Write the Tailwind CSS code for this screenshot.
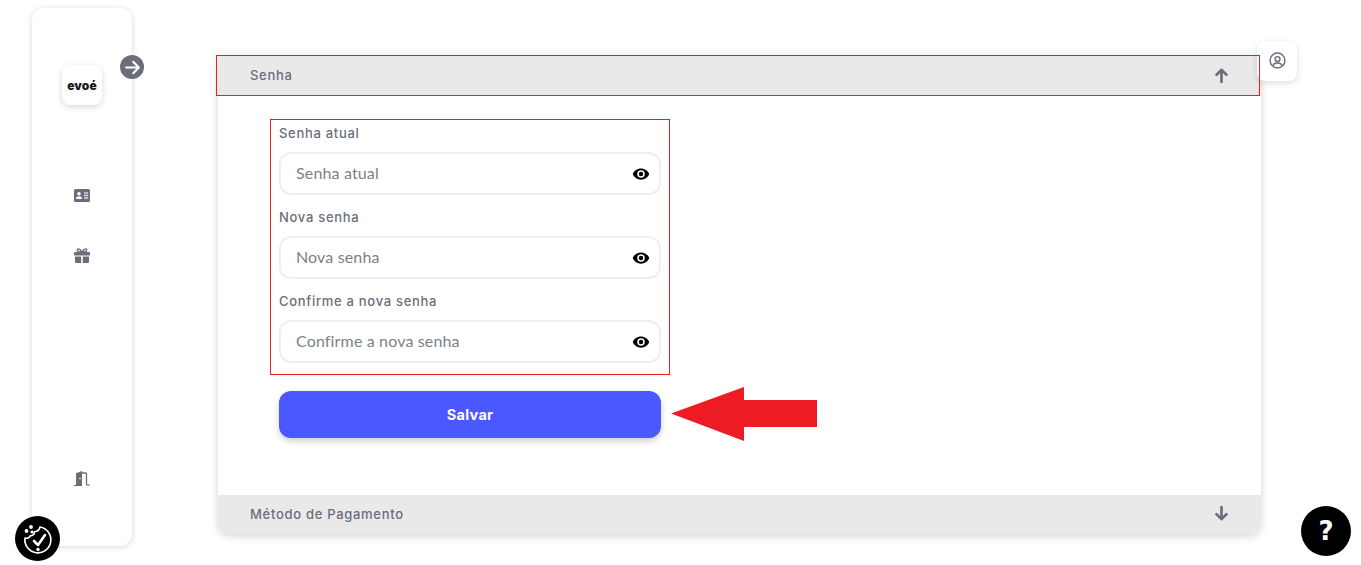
<!DOCTYPE html>
<html lang="en">
<head>
  <meta charset="UTF-8">
  <title>Senha</title>
  <script src="https://cdn.jsdelivr.net/npm/@tailwindcss/browser@4"></script>
</head>
<body class="bg-white h-[565px] overflow-hidden relative font-['Inter',sans-serif]">

  <div class="flex items-start h-[565px] pt-2 pl-8">
    <!-- Sidebar -->
    <aside class="relative w-[100px] h-[538px] bg-white rounded-xl shadow-[0_1px_6px_rgba(0,0,0,0.16)] flex flex-col items-center pt-[57px] pb-[60px] shrink-0">
      <div class="w-10 h-10 bg-white rounded-lg shadow-[0_2px_6px_rgba(0,0,0,0.16)] flex items-center justify-center">
        <span class="font-black text-[12px] text-[#1b1b1f] tracking-[0.1px] pt-px">evoé</span>
      </div>

      <svg class="mt-[84px]" width="16" height="13" viewBox="0 0 16 13">
        <rect width="16" height="13" rx="1.5" fill="#6b6e7a"/>
        <circle cx="5" cy="4.8" r="1.8" fill="#fff"/>
        <path d="M2 10c0-2 1.300-2.700 3-2.700S8 8 8 10z" fill="#fff"/>
        <path d="M10 4h4.200M10 6.500h4.200M10 9h4.200" stroke="#d5d6da" stroke-width="1.300"/>
      </svg>

      <svg class="mt-[46px]" width="16" height="15" viewBox="0 0 16 15">
        <path d="M8 4C6 .5 3.500.2 3.200 2 3 3.500 5 4 8 4c3 0 5-.5 4.800-2C12.500.2 10 .5 8 4z" fill="none" stroke="#6b6e7a" stroke-width="1.300"/>
        <rect y="4" width="16" height="3.500" rx=".6" fill="#6b6e7a"/>
        <path d="M1 8.500h6.200V15H2a1 1 0 0 1-1-1zM8.800 8.500H15V14a1 1 0 0 1-1 1H8.800z" fill="#6b6e7a"/>
      </svg>

      <svg class="mt-auto" width="16" height="15" viewBox="0 0 16 15">
        <path d="M2 14V2.200L8 0v14z" fill="#6b6e7a"/>
        <circle cx="6" cy="7.500" r=".8" fill="#fff"/>
        <path d="M8 2h3.500a1 1 0 0 1 1 1v10.500c0 .5.500.7 3 .7" fill="none" stroke="#6b6e7a" stroke-width="1.300"/>
        <path d="M0 14.500h8" stroke="#6b6e7a" stroke-width="1.200"/>
      </svg>

      <button class="absolute left-[88px] top-[47px] w-6 h-6 rounded-full bg-[#6b6e7a] flex items-center justify-center">
        <svg width="17" height="17" viewBox="0 0 24 24" fill="none" stroke="#fff" stroke-width="3" stroke-linecap="round" stroke-linejoin="round">
          <path d="M3 12h18M13 4l8 8-8 8"/>
        </svg>
      </button>
    </aside>

    <!-- Accordion card -->
    <main class="ml-[86px] mt-[48px] w-[1043px] h-[478px] bg-white rounded-b-xl shadow-[0_2px_8px_rgba(0,0,0,0.18)] flex flex-col shrink-0">
      <div class="h-10 bg-[#e9e9e9] flex items-center justify-between pl-[32px] pr-[31px] shrink-0">
        <span class="font-medium text-[13px] tracking-[0.7px] text-[#6b6e7a] -mt-px">Senha</span>
        <svg class="-mt-0.5" width="17" height="17" viewBox="0 0 24 24" fill="none" stroke="#6b6e7a" stroke-width="3.800" stroke-linecap="round" stroke-linejoin="round">
          <path d="M12 21V4M5 11l7-7 7 7"/>
        </svg>
      </div>

      <form class="w-[382px] ml-[61px] mt-[28px] flex flex-col flex-1">
        <label class="h-[28px] font-medium text-[13px] tracking-[0.7px] leading-[18px] text-[#6b6e7a]">Senha atual</label>
        <div class="h-[43px] rounded-xl border-2 border-[#efefef] flex items-center justify-between pl-[15px] pr-[9px]">
          <span class="font-['Lato',sans-serif] text-[16px] tracking-[0.15px] text-[#7b7f8a] -mt-0.5">Senha atual</span>
          <svg width="18" height="18" viewBox="0 0 24 24" fill="#000"><path d="M12 4.500C7 4.500 2.700 7.600 1 12c1.700 4.400 6 7.500 11 7.500s9.300-3.100 11-7.500c-1.700-4.400-6-7.500-11-7.500zM12 17a5 5 0 1 1 0-10 5 5 0 0 1 0 10zm0-8a3 3 0 1 0 0 6 3 3 0 0 0 0-6z"/></svg>
        </div>

        <label class="mt-[13px] h-[28px] font-medium text-[13px] tracking-[0.7px] leading-[18px] text-[#6b6e7a]">Nova senha</label>
        <div class="h-[43px] rounded-xl border-2 border-[#efefef] flex items-center justify-between pl-[15px] pr-[9px]">
          <span class="font-['Lato',sans-serif] text-[16px] tracking-[0.15px] text-[#7b7f8a] -mt-0.5">Nova senha</span>
          <svg width="18" height="18" viewBox="0 0 24 24" fill="#000"><path d="M12 4.500C7 4.500 2.700 7.600 1 12c1.700 4.400 6 7.500 11 7.500s9.300-3.100 11-7.500c-1.700-4.400-6-7.500-11-7.500zM12 17a5 5 0 1 1 0-10 5 5 0 0 1 0 10zm0-8a3 3 0 1 0 0 6 3 3 0 0 0 0-6z"/></svg>
        </div>

        <label class="mt-[13px] h-[28px] font-medium text-[13px] tracking-[0.7px] leading-[18px] text-[#6b6e7a]">Confirme a nova senha</label>
        <div class="h-[43px] rounded-xl border-2 border-[#efefef] flex items-center justify-between pl-[15px] pr-[9px]">
          <span class="font-['Lato',sans-serif] text-[16px] tracking-[0.15px] text-[#7b7f8a] -mt-0.5">Confirme a nova senha</span>
          <svg width="18" height="18" viewBox="0 0 24 24" fill="#000"><path d="M12 4.500C7 4.500 2.700 7.600 1 12c1.700 4.400 6 7.500 11 7.500s9.300-3.100 11-7.500c-1.700-4.400-6-7.500-11-7.500zM12 17a5 5 0 1 1 0-10 5 5 0 0 1 0 10zm0-8a3 3 0 1 0 0 6 3 3 0 0 0 0-6z"/></svg>
        </div>

        <button type="button" class="mt-7 h-[47px] rounded-xl bg-[#4b57ff] shadow-[0_3px_6px_rgba(0,0,0,0.2)] font-bold text-[14.500px] tracking-[0.3px] text-white">Salvar</button>
      </form>

      <div class="h-[39px] bg-[#e9e9e9] rounded-b-xl flex items-center justify-between pl-[32px] pr-[31px] shrink-0">
        <span class="font-medium text-[13px] tracking-[0.7px] text-[#6b6e7a]">Método de Pagamento</span>
        <svg class="-mt-0.5" width="17" height="17" viewBox="0 0 24 24" fill="none" stroke="#6b6e7a" stroke-width="3.800" stroke-linecap="round" stroke-linejoin="round">
          <path d="M12 3v17M5 13l7 7 7-7"/>
        </svg>
      </div>
    </main>
  </div>

  <!-- Profile button -->
  <button class="absolute left-[1257px] top-[41px] w-10 h-10 bg-white rounded-lg shadow-[0_2px_6px_rgba(0,0,0,0.14)] flex items-center justify-center">
    <svg class="-mt-0.5" width="17" height="17" viewBox="0 0 24 24" fill="none" stroke="#6b6e7a" stroke-width="2">
      <circle cx="12" cy="12" r="10.500"/>
      <circle cx="12" cy="10" r="3.500"/>
      <path d="M5.500 19.500c1-3 3.500-4 6.500-4s5.500 1 6.500 4"/>
    </svg>
  </button>

  <!-- Cookie badge -->
  <button class="absolute left-[15px] top-[516px] w-[45px] h-[45px] rounded-full bg-black flex items-center justify-center">
    <svg width="32" height="32" viewBox="0 0 32 32" fill="none" stroke="#fff" stroke-width="1.600" stroke-linecap="round" stroke-linejoin="round">
      <path d="M18 4a13 13 0 1 1-15 11c2 .8 4.500 0 5.200-2.300 2.500.3 4.500-1.500 4.300-4C15 8.500 17.500 6.800 18 4z"/>
      <path d="M12 18l4 4 7-10" stroke-width="2.600"/>
      <circle cx="16" cy="26.500" r=".9" fill="#fff"/>
      <circle cx="9" cy="4" r="1.100" fill="#fff"/>
      <circle cx="4.500" cy="8" r="1.100" fill="#fff"/>
      <circle cx="10" cy="9" r=".8" fill="#fff"/>
    </svg>
  </button>

  <!-- Help badge -->
  <button class="absolute left-[1301px] top-[506px] w-[50px] h-[50px] rounded-full bg-black flex items-center justify-center font-['DejaVu_Sans',sans-serif] font-bold text-[26px] text-white">?</button>

  <!-- Red annotations drawn over the screenshot -->
  <div class="absolute left-[216px] top-[55px] w-[1044px] h-[41px] border border-[#ed1c24]"></div>
  <div class="absolute left-[270px] top-[119px] w-[400px] h-[256px] border border-[#ed1c24]"></div>
  <svg class="absolute left-[670px] top-[386px]" width="148" height="56" viewBox="0 0 148 56">
    <path d="M1 27.500L74 1v13h73v27H74v14z" fill="#ed1c24"/>
  </svg>

</body>
</html>
